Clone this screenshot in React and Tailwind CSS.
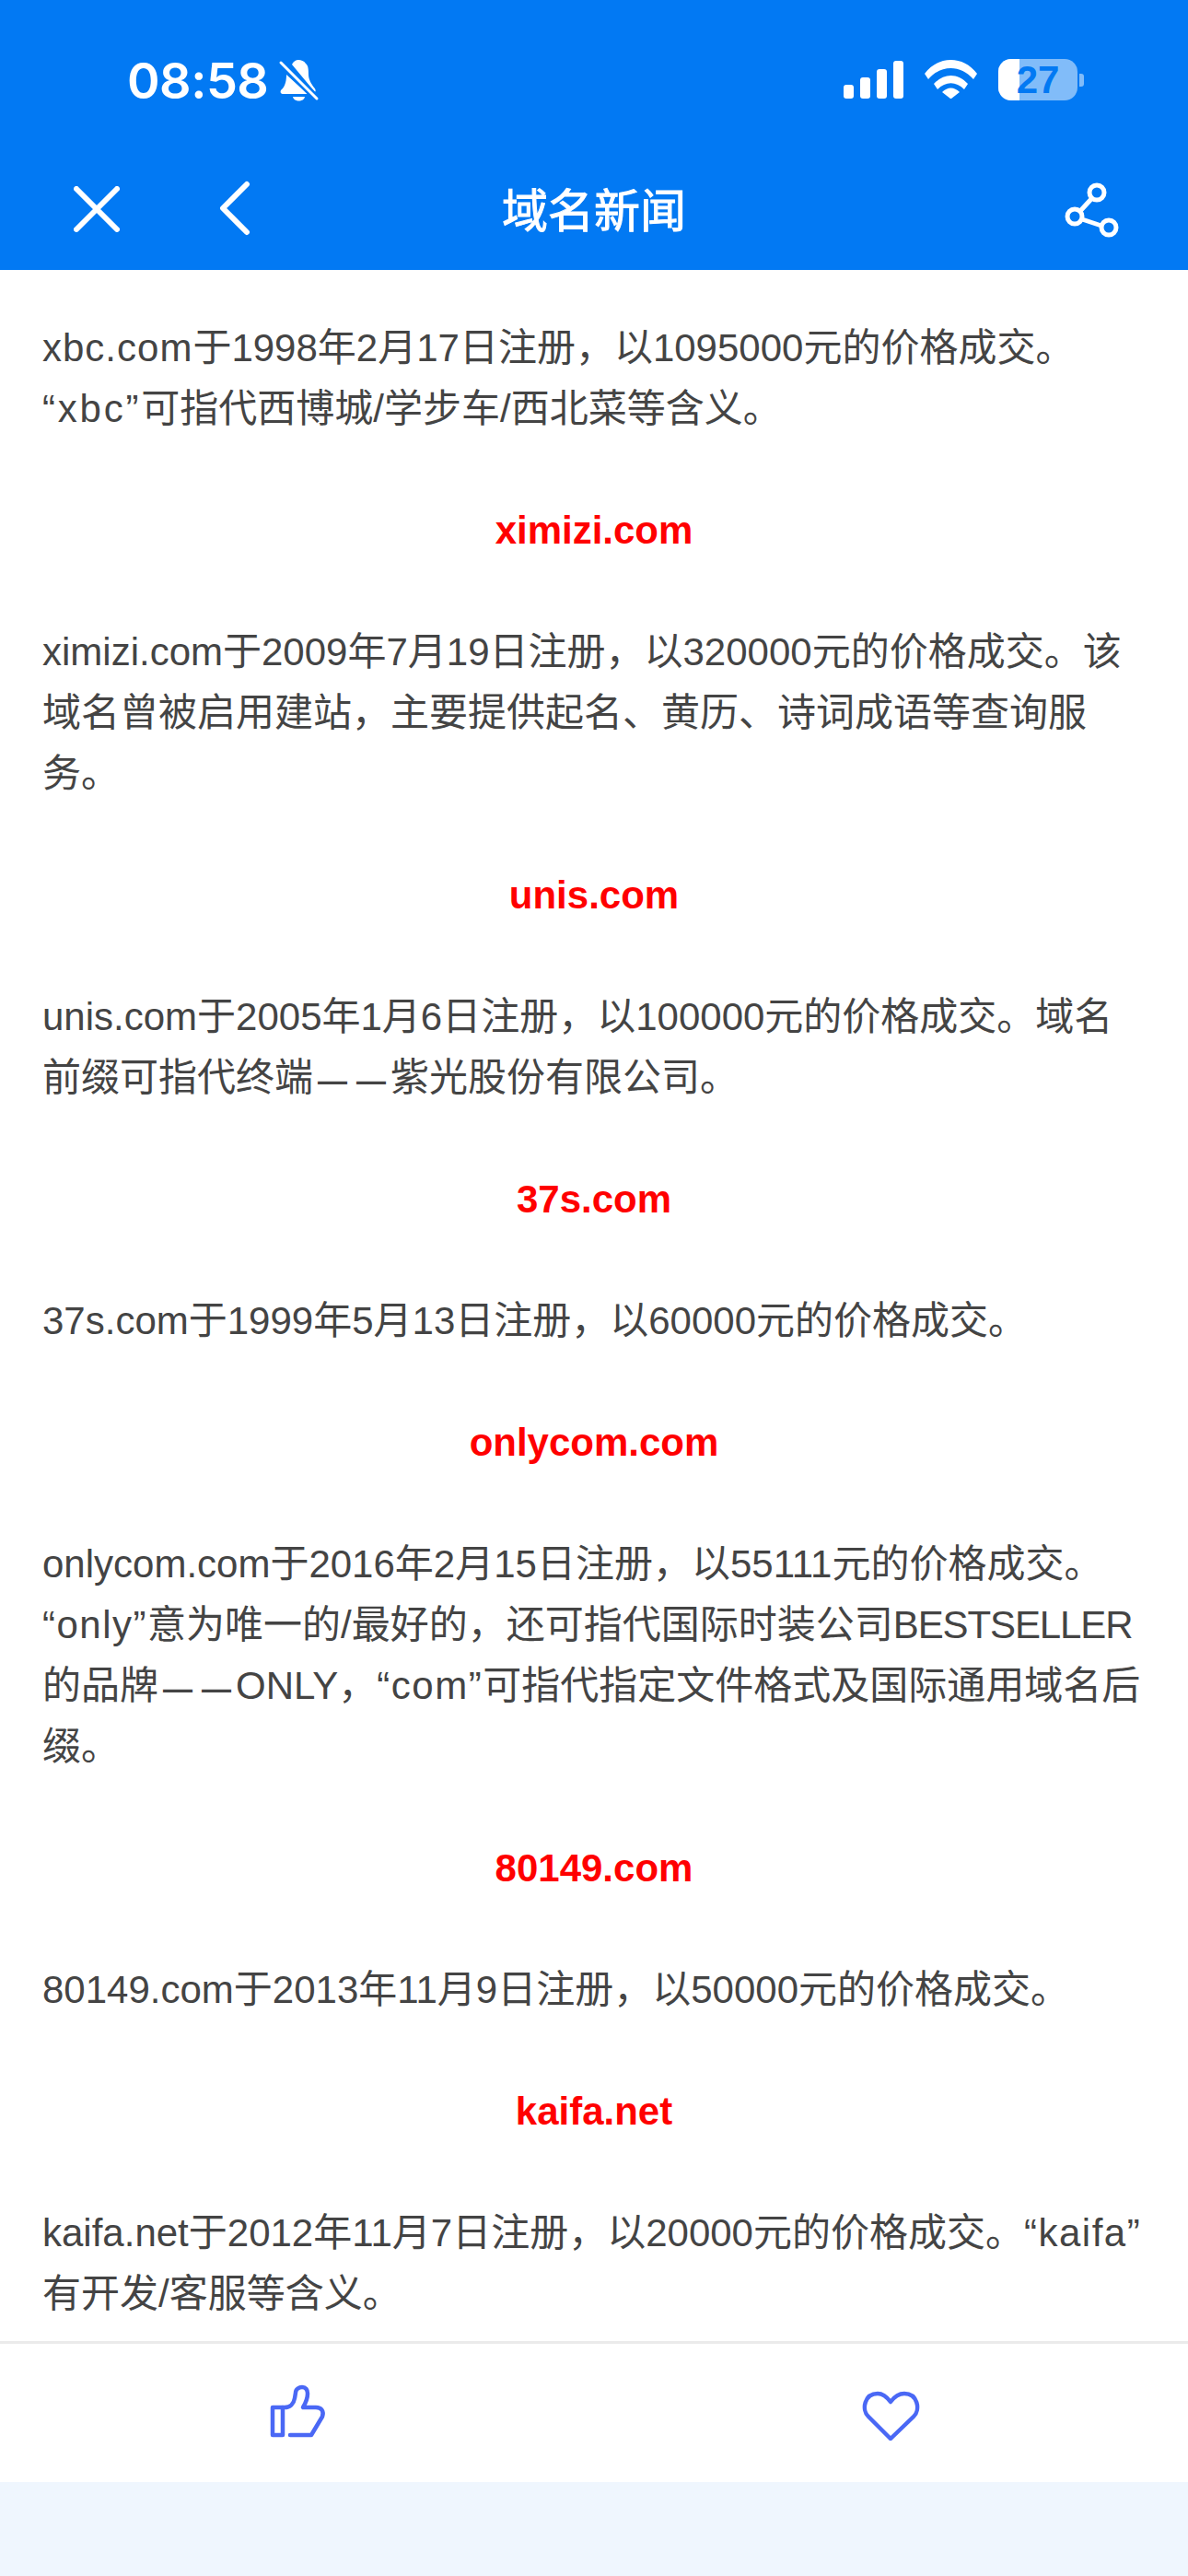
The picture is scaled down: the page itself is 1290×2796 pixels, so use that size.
import React from "react";

// the reference draws each dash of —— shorter, with a gap between them
const Dash = () => (
  <span className="text-[32px] leading-none font-semibold">
    <span className="px-[5px]">—</span>
    <span className="px-[5px]">—</span>
  </span>
);

const Quoted = ({ children, wide }) => (
  <span className={wide ? "tracking-[2.8px]" : "tracking-[1.5px]"}>“{children}”</span>
);

const articles = [
  { body: <><span className="tracking-[1px]">xbc.com</span>于1998年2月17日注册，以1095000元的价格成交。{"\u200b"}<Quoted wide>xbc</Quoted>可指代西博城/学步车/西北菜等含义。</> },
  { title: "ximizi.com", body: "ximizi.com于2009年7月19日注册，以320000元的价格成交。该域名曾被启用建站，主要提供起名、黄历、诗词成语等查询服务。" },
  { title: "unis.com", body: <>unis.com于2005年1月6日注册，以100000元的价格成交。域名前缀可指代终端<Dash />紫光股份有限公司。</> },
  { title: "37s.com", body: "37s.com于1999年5月13日注册，以60000元的价格成交。" },
  { title: "onlycom.com", body: <>onlycom.com于2016年2月15日注册，以55111元的价格成交。{"\u200b"}<Quoted>only</Quoted>意为唯一的/最好的，还可指代国际时装公司<span className="tracking-[-1.1px]">BESTSELLER</span>的品牌<Dash />ONLY，<Quoted>com</Quoted>可指代指定文件格式及国际通用域名后缀。</> },
  { title: "80149.com", body: "80149.com于2013年11月9日注册，以50000元的价格成交。" },
  { title: "kaifa.net", body: <>kaifa.net于2012年11月7日注册，以20000元的价格成交。{"\u200b"}<Quoted>kaifa</Quoted>{"\u200b"}有开发/客服等含义。</> },
];

const BellOff = () => (
  <svg width="70" height="65" viewBox="0 0 70 65" fill="#fff" className="-ml-[16px] -mt-[9px]">
    <path d="M26 15C28 11 31 10 33 10C36 10 39 11 41 14C44 16 44 22 44 26C44 31 47 36 50 40C52 42 52 44 51 45Z" />
    <path d="M20 26 43 47H16C13 47 13 43 15 42C19 38 20 32 20 26Z" />
    <path d="M27 50h13c-1 6-12 6-13 0z" />
    <path d="M14 13 53 52" stroke="#0279f3" strokeWidth="8" />
    <path d="M14 13 53 52" stroke="#fff" strokeWidth="3" strokeLinecap="round" />
  </svg>
);

const Signal = () => (
  <div className="flex items-end gap-[7px] h-[41px] mt-[2px]">
    <div className="w-[11px] h-[15px] bg-white rounded-[3px]" />
    <div className="w-[11px] h-[23px] bg-white rounded-[3px]" />
    <div className="w-[11px] h-[32px] bg-white rounded-[3px]" />
    <div className="w-[11px] h-[41px] bg-white rounded-[3px]" />
  </div>
);

const Wifi = () => (
  <svg width="57" height="42" viewBox="0 0 57 42" fill="#fff" className="mt-[1px]">
    <path d="M0 15C15-5 42-5 57 15l-4 6C39 5 18 5 4 21z" />
    <path d="M10 26c11-12 26-12 37 0l-4 6c-9-9-20-9-29 0z" />
    <path d="M19 35c6-6 13-6 19 0l-9 7h-1z" />
  </svg>
);

const Battery = () => (
  <div className="flex items-center gap-[2px] h-[45px]">
    <div className="relative w-[86px] h-[45px] rounded-[14px] overflow-hidden bg-white/50">
      <div className="absolute left-0 top-0 bottom-0 w-[23px] bg-white" />
      <span className="absolute inset-0 flex items-center justify-center text-[42px] leading-none font-bold text-[#0279f3]">27</span>
    </div>
    <div className="w-[5px] h-[14px] rounded-r-[3px] bg-white/50" />
  </div>
);

const App = () => {
  return (
    <div className="h-[2796px] flex flex-col bg-[#eff6fe] overflow-hidden font-['Liberation_Sans','Noto_Sans_CJK_SC',sans-serif]">
      <header className="h-[293px] shrink-0 bg-[#0279f3] text-white">
        <div className="h-[175px] flex justify-between pl-[138px] pr-[113px] pt-[64px]">
          <div className="flex items-start gap-[16px] h-[46px]">
            <span className="text-[54px] leading-[48px] font-semibold tracking-[-0.5px] font-['Inter',sans-serif]">08:58</span>
            <BellOff />
          </div>
          <div className="flex items-start gap-[23px]">
            <Signal />
            <Wifi />
            <Battery />
          </div>
        </div>
        <div className="relative h-[118px] flex items-center justify-center">
          <svg className="absolute left-[80px] top-[27px]" width="50" height="50" viewBox="0 0 50 50" fill="none" stroke="#fff" strokeWidth="6" strokeLinecap="round">
            <path d="M3 3 47 47M47 3 3 47" />
          </svg>
          <svg className="absolute left-[236px] top-[21px]" width="38" height="60" viewBox="0 0 38 60" fill="none" stroke="#fff" strokeWidth="6" strokeLinecap="round" strokeLinejoin="round">
            <path d="M32 4 6 30l26 26" />
          </svg>
          <h1 className="text-[50px] leading-none font-normal -mt-[9px] [-webkit-text-stroke:1px_#fff]">域名新闻</h1>
          <svg className="absolute left-[1155px] top-[23px]" width="61" height="60" viewBox="0 0 61 60" fill="none" stroke="#fff" strokeWidth="5">
            <circle cx="36" cy="11" r="8" />
            <circle cx="12" cy="37" r="8" />
            <circle cx="49" cy="49" r="8" />
            <path d="M30 18 18 31M20 40l21 7" />
          </svg>
        </div>
      </header>

      <main className="flex-1 min-h-0 overflow-hidden bg-white px-[46px] pt-[52px] text-[42px] leading-[66px] text-[#444]">
        {articles.map((item, i) => (
          <div key={i}>
            {item.title && <h2 className="text-center font-bold text-[#ff0000] mb-[66px]">{item.title}</h2>}
            <p className="mb-[66px]">{item.body}</p>
          </div>
        ))}
      </main>

      <footer className="h-[153px] shrink-0 flex bg-white border-t-[3px] border-[#ebebeb]">
        <div className="w-1/2 flex items-center justify-center">
          <svg width="62" height="64" viewBox="22 17 62 64" fill="none" stroke="#4a68f5" strokeWidth="4.5" strokeLinejoin="round" strokeLinecap="round">
            <path d="M26 43h11v30H26z" />
            <path d="M37 43h2c6 0 10-4 11-10l1-6c0-4 4-6 7-6 4 0 6 3 6 7 0 6-2 10-5 15h14c6 0 9 4 7 10L68 73H45" />
          </svg>
        </div>
        <div className="w-1/2 flex items-center justify-center">
          <svg width="65" height="60" viewBox="20 19 65 60" fill="none" stroke="#4a68f5" strokeWidth="4.5" strokeLinejoin="round">
            <path d="M52 77 28 53C20 45 24 28 38 28 45 28 49 33 52 37 55 33 60 28 67 28 81 28 85 45 77 53Z" />
          </svg>
        </div>
      </footer>
      <div className="h-[102px] shrink-0 bg-[#eff6fe]" />
    </div>
  );
};

export default App;
